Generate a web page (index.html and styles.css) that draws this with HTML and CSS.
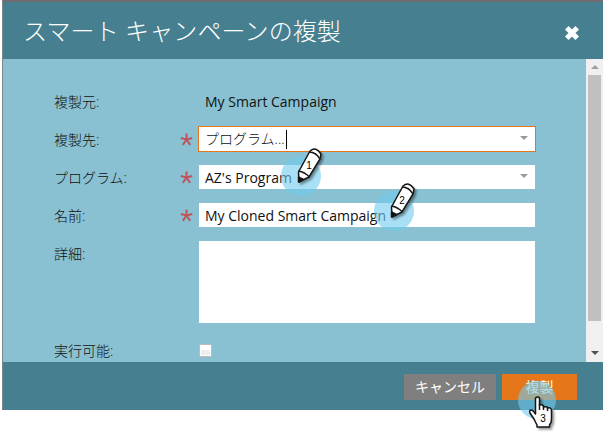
FILE: index.html
```html
<!DOCTYPE html>
<html lang="ja">
<head>
<meta charset="utf-8">
<title>スマート キャンペーンの複製</title>
<link rel="stylesheet" href="styles.css">
</head>
<body>
<div class="dialog">
  <header class="header">
    <h1 class="title">スマート キャンペーンの複製</h1>
    <svg class="close" width="16" height="16" viewBox="0 0 16 16"><path d="M2.8 2.8l10.4 10.4M13.2 2.8L2.8 13.2"/></svg>
  </header>
  <div class="body">
    <form class="form">
      <div class="row"><label>複製元:</label><span></span><div class="value">My Smart Campaign</div></div>
      <div class="row"><label>複製先:</label><svg class="star" viewBox="0 0 12 12"><path d="M6 6V.5M6 6L.7 4.6M6 6l5.3-1.4M6 6l-3.4 5M6 6l3.4 5"/></svg><div class="field focused"><span class="jp">プログラム...</span><i class="caret"></i><svg class="arrow" viewBox="0 0 8 4"><path d="M0 0h8L4 4z"/></svg></div></div>
      <div class="row"><label>プログラム:</label><svg class="star" viewBox="0 0 12 12"><path d="M6 6V.5M6 6L.7 4.6M6 6l5.3-1.4M6 6l-3.4 5M6 6l3.4 5"/></svg><div class="field">AZ's Program<svg class="arrow" viewBox="0 0 8 4"><path d="M0 0h8L4 4z"/></svg></div></div>
      <div class="row"><label>名前:</label><svg class="star" viewBox="0 0 12 12"><path d="M6 6V.5M6 6L.7 4.6M6 6l5.3-1.4M6 6l-3.4 5M6 6l3.4 5"/></svg><div class="field">My Cloned Smart Campaign</div></div>
      <div class="row tall"><label>詳細:</label><span></span><div class="area"></div></div>
      <div class="row last"><label>実行可能:</label><span></span><div class="check"></div></div>
    </form>
    <div class="scrollbar">
      <svg class="up" viewBox="0 0 8 4"><path d="M4 0l4 4H0z"/></svg>
      <div class="thumb"></div>
      <svg class="down" viewBox="0 0 8 4"><path d="M0 0h8L4 4z"/></svg>
    </div>
  </div>
  <footer class="footer">
    <div class="button cancel">キャンセル</div>
    <div class="button clone">複製</div>
  </footer>
</div>
<svg class="marker first" width="50" height="60" viewBox="0 0 50 60">
  <circle cx="21" cy="37" r="20"/>
  <g class="pencil">
    <path d="M18.5 33L30 12Q36 7 41 15L40 20L29 38L19 43Z"/>
    <path class="line" d="M29 13q7 0 11 7M18.5 32q6 1 11 6"/>
    <path class="tip" d="M18.5 38l5 2.5-5 2.5z"/>
  </g>
  <text x="29" y="30">1</text>
</svg>
<svg class="marker second" width="50" height="60" viewBox="0 0 50 60">
  <circle cx="21" cy="37" r="20"/>
  <g class="pencil">
    <path d="M18.5 33L30 12Q36 7 41 15L40 20L29 38L19 43Z"/>
    <path class="line" d="M29 13q7 0 11 7M18.5 32q6 1 11 6"/>
    <path class="tip" d="M18.5 38l5 2.5-5 2.5z"/>
  </g>
  <text x="29" y="30">2</text>
</svg>
<svg class="marker third" width="50" height="56" viewBox="0 0 50 56">
  <circle cx="20" cy="20" r="19"/>
  <g class="hand">
    <path d="M18.5 31V19q0-2 2-2t2 2v6q4-1 4 2q4-1 4 1q4-1 4 3v8q0 4-2 6v2H20v-2l-3-6-4-6q-1-3 1-3t4.500 4z"/>
    <path class="line" d="M22.500 24v6M26.500 26v4M30.500 27v4"/>
  </g>
  <text x="26" y="42">3</text>
</svg>
</body>
</html>
```
FILE: styles.css
```css
* { box-sizing: border-box; }
body {
  margin: 0;
  width: 609px;
  height: 444px;
  overflow: hidden;
  background: #fff;
  font: 14px "Open Sans", "Noto Sans CJK JP", sans-serif;
  color: #111;
}
.dialog {
  width: 600px;
  height: 410px;
  margin-left: 3px;
  border-top: 2px solid #706b70;
  box-shadow: -1px 0 #7b858a;
}
.header {
  height: 57px;
  padding: 0 23px 0 20px;
  display: flex;
  align-items: center;
  justify-content: space-between;
  background: #468090;
}
.title {
  margin: 0;
  color: #fff;
  font-size: 24px;
  font-weight: 300;
  letter-spacing: .12px;
  line-height: 32px;
  white-space: nowrap;
}
.close { margin-top: 5px; fill: none; stroke: #fff; stroke-width: 5; }
.body { height: 303px; display: flex; background: #89c1d2; }
.form { width: 583px; padding: 23px 50px 0; overflow: hidden; }
.row {
  height: 38px;
  display: grid;
  grid-template-columns: 127px 18px 338px;
  align-items: center;
}
.row label { padding: 0 0 1px 1px; white-space: nowrap; font-weight: 300; }
.value { padding: 1px 0 0 7px; }
.star { width: 13px; height: 13px; fill: none; stroke: #c1535c; stroke-width: 1.8; }
.field {
  width: 336px;
  height: 24px;
  margin-left: 1px;
  padding: 0 7px 0 6px;
  display: flex;
  align-items: center;
  background: #fff;
}
.field.focused { width: 338px; height: 26px; margin-left: 0; border: 1px solid #e6761a; }
.jp { font-weight: 300; padding-bottom: 2px; }
.caret { width: 1px; height: 19px; margin-left: 1px; background: #000; }
.arrow { width: 8px; height: 4px; margin: 0 0 2px auto; fill: #999b98; }
.row.tall { height: 97px; align-items: start; }
.row.tall label { padding-top: 9px; }
.area { width: 336px; height: 82px; margin: 7px 0 0 1px; background: #fff; }
.check {
  width: 13px;
  height: 13px;
  margin-left: 1px;
  border: 1px solid #bbb;
  background: linear-gradient(#fff 45%, #eee 45%);
  box-shadow: inset 0 0 0 1px #fff;
}
.scrollbar {
  width: 17px;
  padding: 6px 2px 7px;
  display: flex;
  flex-direction: column;
  align-items: center;
  background: #f0f0f0;
}
.up, .down { width: 8px; height: 4px; fill: #a0a0a0; }
.thumb { width: 13px; height: 246px; margin-top: 6px; background: #c0c0c0; }
.down { margin-top: auto; fill: #505050; }
.footer {
  height: 48px;
  padding: 12px 26px 10px;
  display: flex;
  justify-content: flex-end;
  gap: 6px;
  background: #468090;
}
.button { height: 26px; color: #fff; text-align: center; line-height: 25px; }
.cancel { width: 92px; background: #7f7f7f; }
.clone { width: 75px; background: #e6761a; }
.marker { position: absolute; overflow: visible; }
.marker circle { fill: #70ccef; fill-opacity: .6; }
.marker text { font: 10px "Liberation Sans", sans-serif; fill: #000; text-anchor: middle; }
.pencil, .hand { fill: #fff; stroke: #151515; stroke-width: 1.5; stroke-linejoin: round; filter: drop-shadow(2px 2px 1px rgba(0, 0, 0, .4)); }
.line { fill: none; }
.tip { fill: #111; }
.first { left: 280px; top: 139px; }
.second { left: 373px; top: 174px; }
.third { left: 517px; top: 380px; }
```
